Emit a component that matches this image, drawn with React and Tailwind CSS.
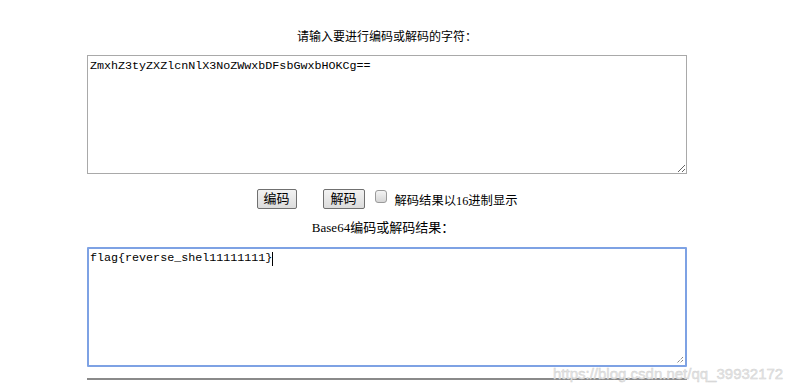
export default function App() {
  const font = { fontFamily: '"Liberation Serif", "Noto Sans CJK SC", serif' };
  return (
    <div className="relative w-[790px] h-[392px] bg-white overflow-hidden text-black" style={font}>
      <div className="ml-[87px] w-[600px] pt-[30px] flex flex-col">
        <p className="text-center text-[12px] leading-[14px]">请输入要进行编码或解码的字符：</p>

        <textarea
          readOnly
          defaultValue="ZmxhZ3tyZXZlcnNlX3NoZWwxbDFsbGwxbHOKCg=="
          className="mt-[11px] h-[119px] w-full border border-[#a9a9a9] px-[2px] py-[3px] text-[11.7px] leading-[15px] outline-none resize-y"
          style={{ fontFamily: '"Liberation Mono", monospace' }}
        />

        <div className="mt-[15px] flex items-center justify-center h-[20px]">
          <button className="h-[20px] w-[40px] border border-[#707070] rounded-[2px] bg-gradient-to-b from-[#f2f2f2] to-[#dcdcdc] text-[13px] leading-[16px]">
            编码
          </button>
          <button className="ml-[26px] h-[20px] w-[42px] border border-[#707070] rounded-[2px] bg-gradient-to-b from-[#f2f2f2] to-[#dcdcdc] text-[13px] leading-[16px]">
            解码
          </button>
          <span className="ml-[10px] mb-[5px] inline-block w-[12px] h-[13px] rounded-[3px] border border-[#9a9a9a] bg-gradient-to-b from-[#f4f4f4] to-[#d6d6d6]" />
          <span className="ml-[8px] mt-[3px] text-[12.3px] leading-[16px]">解码结果以16进制显示</span>
        </div>

        <p className="mt-[11px] text-center text-[13px] leading-[15px] pr-[8px]">Base64编码或解码结果：</p>

        <div className="mt-[12px] h-[120px] w-full border-2 border-[#7ea2e4] rounded-[1px] relative">
          <textarea
            readOnly
            defaultValue="flag{reverse_shel11111111}"
            className="block h-full w-full px-[1px] py-[2px] text-[11.7px] leading-[15px] outline-none resize-none"
            style={{ fontFamily: '"Liberation Mono", monospace' }}
          />
          <span className="absolute left-[183px] top-[3px] w-px h-[14px] bg-black" />
          <svg className="absolute right-[1px] bottom-[1px]" width="9" height="9" viewBox="0 0 9 9">
            <path d="M8 2 L2 8 M8 5 L5 8" stroke="#555" strokeWidth="1" strokeDasharray="1 1" />
          </svg>
        </div>

        <div className="mt-[11px] h-[2px] w-full bg-[#8a8a8a]" />
      </div>

      <span
        className="absolute left-[553px] top-[365px] text-[15px] leading-[18px] text-[#e6e6e6]"
        style={{ fontFamily: '"Liberation Sans", sans-serif', WebkitTextStroke: '0.4px #cfcfcf' }}
      >
        https://blog.csdn.net/qq_39932172
      </span>
    </div>
  );
}
